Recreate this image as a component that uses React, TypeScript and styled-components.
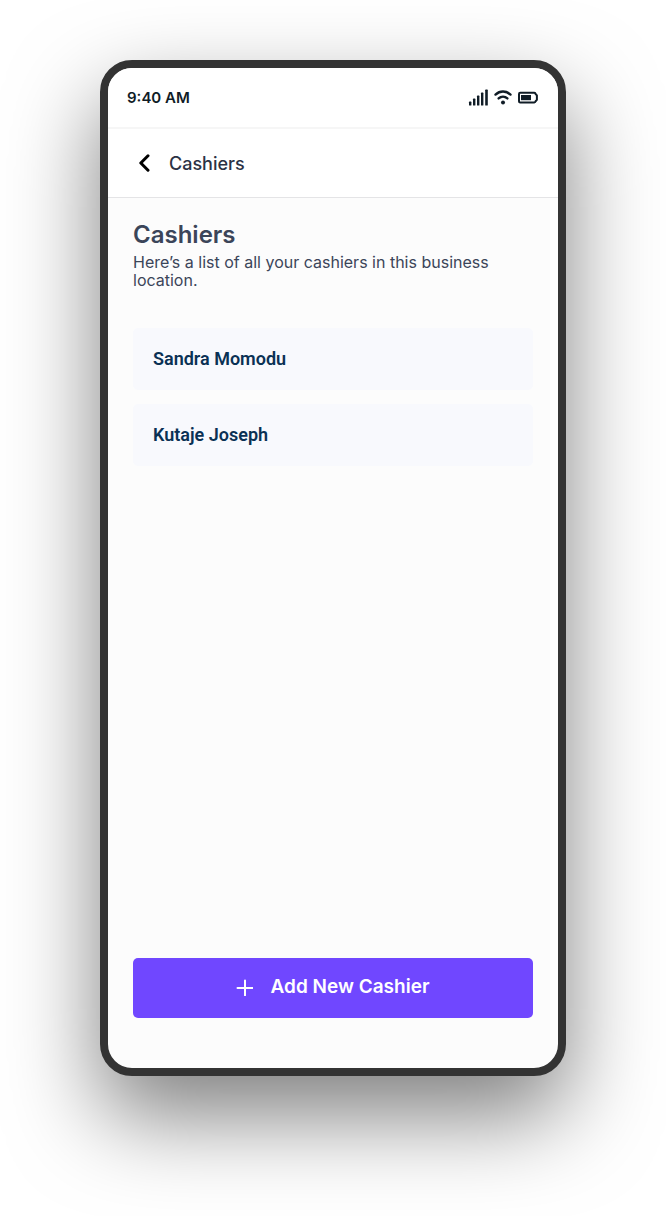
import React from "react";
import styled, { createGlobalStyle } from "styled-components";

const GlobalStyle = createGlobalStyle`
  *, *::before, *::after { box-sizing: border-box; }
  body {
    margin: 0;
    background: #ffffff;
    font-family: Inter, "Liberation Sans", sans-serif;
    color: #3b4559;
  }
  h1, h2, p, ul { margin: 0; padding: 0; }
`;

const Stage = styled.div`
  display: flex;
  min-height: 100vh;
  padding: 60px 100px 140px;
`;

const Phone = styled.div`
  display: flex;
  flex: 1;
  flex-direction: column;
  min-width: 0;
  overflow: hidden;
  border: 8px solid #333333;
  border-radius: 32px;
  background: #fcfcfc;
  box-shadow: 0 40px 90px rgba(0, 0, 0, 0.5);
`;

const StatusBar = styled.div`
  display: flex;
  align-items: center;
  justify-content: space-between;
  height: 61px;
  padding: 0 20px 0 19px;
  border-bottom: 2px solid #f6f6f6;
  background: #ffffff;
  color: #101c26;
  font-size: 15px;
  font-weight: 600;
`;

const StatusIcons = styled.div`
  display: flex;
  align-items: center;
  gap: 6px;
`;

const Header = styled.header`
  display: flex;
  align-items: center;
  gap: 18px;
  height: 69px;
  padding: 2px 30px 0;
  border-bottom: 1px solid #e4e4e6;
  background: #ffffff;
`;

const BackButton = styled.button`
  display: flex;
  padding: 0;
  border: 0;
  background: none;
  color: #000000;
  cursor: pointer;
`;

const HeaderTitle = styled.h1`
  color: #2b3245;
  font-size: 18px;
  font-weight: 500;
  line-height: 24px;
`;

const Content = styled.main`
  display: flex;
  flex: 1;
  flex-direction: column;
  padding: 21px 25px 50px;
`;

const Title = styled.h2`
  font-size: 24px;
  font-weight: 600;
  line-height: 32px;
`;

const Intro = styled.p`
  padding-top: 2px;
  font-size: 16px;
  line-height: 18px;
`;

const CashierList = styled.ul`
  display: flex;
  flex-direction: column;
  gap: 14px;
  margin-top: 39px;
  list-style: none;
`;

const CashierRow = styled.li`
  display: flex;
  align-items: center;
  height: 62px;
  padding: 0 20px 2px;
  border-radius: 5px;
  background: #f8f9fd;
  color: #0a3154;
  font-family: Roboto, "Liberation Sans", sans-serif;
  font-size: 18px;
  font-weight: 600;
`;

const AddButton = styled.button`
  display: flex;
  align-items: center;
  justify-content: center;
  gap: 18px;
  height: 60px;
  margin-top: auto;
  padding: 0 2px 4px 0;
  border: 0;
  border-radius: 5px;
  background: #7047ff;
  color: #ffffff;
  font-family: inherit;
  font-size: 19px;
  font-weight: 600;
  cursor: pointer;
`;

const cashiers = ["Sandra Momodu", "Kutaje Joseph"];

const SignalIcon = () => (
  <svg width="20" height="18" viewBox="0 0 20 18" fill="currentColor" aria-hidden="true">
    <rect x="1" y="12.6" width="2.4" height="4" rx="0.6" />
    <rect x="5" y="9.6" width="2.4" height="7" rx="0.6" />
    <rect x="9" y="6.6" width="2.4" height="10" rx="0.6" />
    <rect x="13" y="3.6" width="2.4" height="13" rx="0.6" />
    <rect x="17.2" y="0.6" width="2.6" height="16" rx="0.6" />
  </svg>
);

const WifiIcon = () => (
  <svg width="18" height="18" viewBox="0 0 18 18" fill="none" stroke="currentColor" strokeWidth="2.4" strokeLinecap="round" aria-hidden="true">
    <path d="M1.5 5.6C5.8 1.5 12.2 1.5 16.5 5.6" />
    <path d="M4.6 9.4C7.1 7.1 10.9 7.1 13.4 9.4" />
    <circle cx="9" cy="13.4" r="2" fill="currentColor" stroke="none" />
  </svg>
);

const BatteryIcon = () => (
  <svg width="20" height="18" viewBox="0 0 20 18" fill="none" aria-hidden="true">
    <path d="M2.2 3.8H16.3Q17.4 3.8 17.6 5L18.9 6.4V10.8L17.6 12.2Q17.4 13.4 16.3 13.4H2.2Q1 13.4 1 12.2V5Q1 3.8 2.2 3.8Z" stroke="currentColor" strokeWidth="2" strokeLinejoin="round" />
    <rect x="3" y="6" width="10" height="5.2" fill="currentColor" />
  </svg>
);

const BackIcon = () => (
  <svg width="13" height="20" viewBox="0 0 13 20" fill="none" stroke="currentColor" strokeWidth="3" strokeLinecap="round" strokeLinejoin="round" aria-hidden="true">
    <path d="M10 1.8L2.8 9L10 16.2" />
  </svg>
);

const PlusIcon = () => (
  <svg width="18" height="20" viewBox="0 0 18 20" fill="none" stroke="currentColor" strokeWidth="2" strokeLinecap="round" aria-hidden="true">
    <path d="M10 4.5V19.5M2.5 12H17.5" />
  </svg>
);

export default function App() {
  return (
    <>
      <GlobalStyle />
      <Stage>
        <Phone>
          <StatusBar>
            <span>9:40 AM</span>
            <StatusIcons>
              <SignalIcon />
              <WifiIcon />
              <BatteryIcon />
            </StatusIcons>
          </StatusBar>
          <Header>
            <BackButton type="button" aria-label="Back">
              <BackIcon />
            </BackButton>
            <HeaderTitle>Cashiers</HeaderTitle>
          </Header>
          <Content>
            <Title>Cashiers</Title>
            <Intro>Here’s a list of all your cashiers in this business location.</Intro>
            <CashierList>
              {cashiers.map((name) => (
                <CashierRow key={name}>{name}</CashierRow>
              ))}
            </CashierList>
            <AddButton type="button">
              <PlusIcon />
              <span>Add New Cashier</span>
            </AddButton>
          </Content>
        </Phone>
      </Stage>
    </>
  );
}
